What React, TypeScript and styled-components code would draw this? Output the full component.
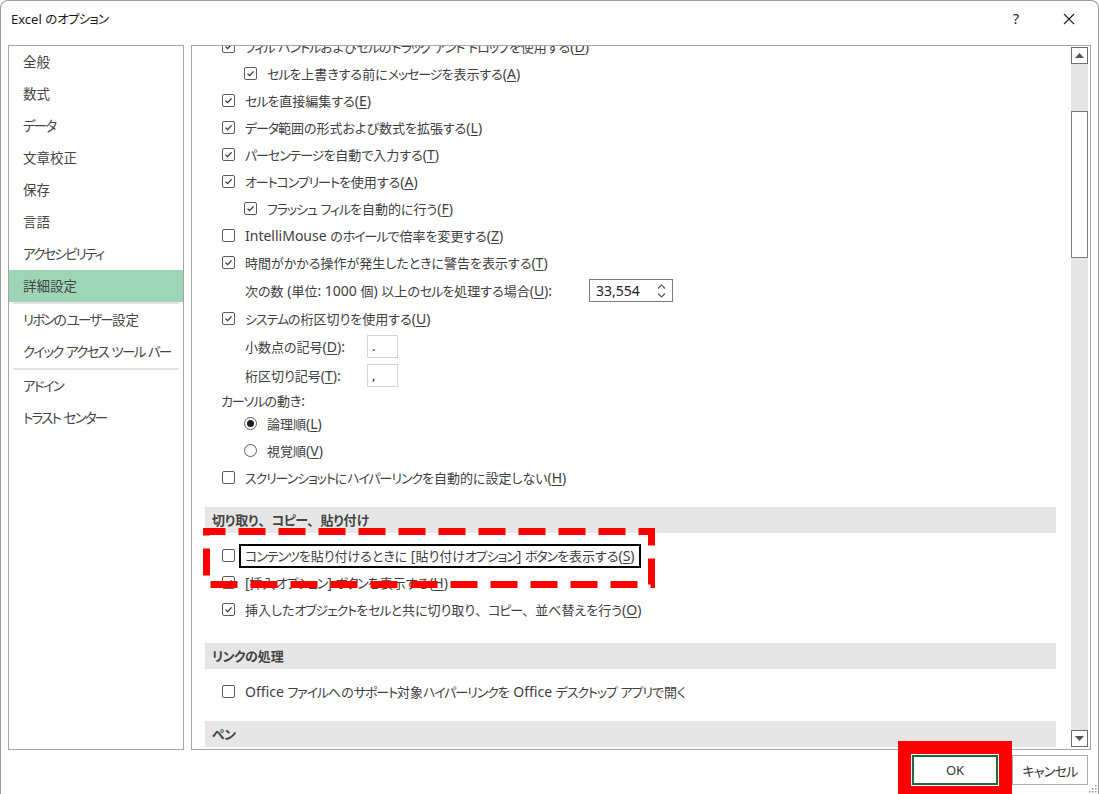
import * as React from 'react';
import styled, { createGlobalStyle } from 'styled-components';

// ----------------------------------------
// global
// ----------------------------------------
const GlobalStyle = createGlobalStyle`
  html, body {
    margin: 0;
    padding: 0;
    background: #ffffff;
  }
  body {
    font-family: "Noto Sans", "Noto Sans CJK JP", sans-serif;
    color: #404040;
  }
  * {
    box-sizing: border-box;
  }
`;

// ----------------------------------------
// text helper: katakana runs are narrower and latin runs a bit larger
// in the Yu Gothic UI look of the original dialog
// ----------------------------------------
const TOKEN = /([\u30A0-\u30FF]+|[\u3001\u3002]|[\x20-\x7E]+)/;

const Txt: React.VFC<{ children: string }> = ({ children }) => (
  <>
    {children
      .split(TOKEN)
      .filter(Boolean)
      .map((part, i) => {
        if (/^[\u30A0-\u30FF]+$/.test(part)) return <Kana key={i}>{part}</Kana>;
        if (/^[\u3001\u3002]$/.test(part)) return <Punct key={i}>{part}</Punct>;
        if (/^[\x20-\x7E]+$/.test(part)) return <Latin key={i}>{part}</Latin>;
        return <React.Fragment key={i}>{part}</React.Fragment>;
      })}
  </>
);

// ----------------------------------------
// small parts
// ----------------------------------------
type CheckProps = { checked: boolean };

const CheckBox: React.VFC<CheckProps> = ({ checked }) => (
  <BoxFrame>
    {checked && (
      <svg width="11" height="11" viewBox="0 0 11 11">
        <path d="M2.5 5.6 L4.6 7.6 L8.6 3.4" fill="none" stroke="#333" strokeWidth="1.3" />
      </svg>
    )}
  </BoxFrame>
);

const Radio: React.VFC<CheckProps> = ({ checked }) => (
  <RadioFrame>{checked && <RadioDot />}</RadioFrame>
);

const Key: React.VFC<{ k?: string; colon?: boolean }> = ({ k, colon }) =>
  k ? (
    <Latin>
      (<u>{k}</u>){colon ? ':' : ''}
    </Latin>
  ) : null;

type RowProps = {
  checked: boolean;
  level?: number;
  label: string;
  k?: string;
  h?: number;
};

const CheckRow: React.VFC<RowProps> = ({ checked, level = 0, label, k, h = 27 }) => (
  <Row $level={level} $h={h}>
    <CheckBox checked={checked} />
    <Label>
      <Txt>{label}</Txt>
      <Key k={k} />
    </Label>
  </Row>
);

const menu = [
  ['全般', '数式', 'データ', '文章校正', '保存', '言語', 'アクセシビリティ', '詳細設定'],
  ['リボンのユーザー設定', 'クイック アクセス ツール バー'],
  ['アドイン', 'トラスト センター'],
];

// ----------------------------------------
// component
// ----------------------------------------
export default function App() {
  return (
    <>
      <GlobalStyle />
      <Window>
        <TitleBar>
          <Title>
            <Txt>Excel のオプション</Txt>
          </Title>
          <HelpButton>?</HelpButton>
          <TitleButton>
            <svg width="12" height="12" viewBox="0 0 12 12">
              <path d="M1 1 L11 11 M11 1 L1 11" stroke="#222" strokeWidth="1.1" />
            </svg>
          </TitleButton>
        </TitleBar>

        <Body>
          <Nav>
            {menu.map((group, gi) => (
              <React.Fragment key={gi}>
                {gi > 0 && <NavSeparator />}
                {group.map((item) => (
                  <NavItem key={item} $active={item === '詳細設定'}>
                    <Txt>{item}</Txt>
                  </NavItem>
                ))}
              </React.Fragment>
            ))}
          </Nav>

          <Main>
            <Viewport>
              <Content>
                <CheckRow checked label="フィル ハンドルおよびセルのドラッグ アンド ドロップを使用する" k="D" />
                <CheckRow checked level={1} label="セルを上書きする前にメッセージを表示する" k="A" />
                <CheckRow checked label="セルを直接編集する" k="E" />
                <CheckRow checked label="データ範囲の形式および数式を拡張する" k="L" />
                <CheckRow checked label="パーセンテージを自動で入力する" k="T" />
                <CheckRow checked label="オートコンプリートを使用する" k="A" />
                <CheckRow checked level={1} label="フラッシュ フィルを自動的に行う" k="F" />
                <CheckRow checked={false} label="IntelliMouse のホイールで倍率を変更する" k="Z" />
                <CheckRow checked label="時間がかかる操作が発生したときに警告を表示する" k="T" />

                <FieldRow $h={29}>
                  <FixedLabel $w={332}>
                    <Txt>次の数 (単位: 1000 個) 以上のセルを処理する場合</Txt>
                    <Key k="U" colon />
                  </FixedLabel>
                  <Spinner>
                    <Latin>33,554</Latin>
                    <svg width="9" height="16" viewBox="0 0 9 16">
                      <path d="M1 5.5 L4.5 2 L8 5.5 M1 10.5 L4.5 14 L8 10.5" fill="none" stroke="#555" strokeWidth="1.1" />
                    </svg>
                  </Spinner>
                </FieldRow>

                <CheckRow checked label="システムの桁区切りを使用する" k="U" />

                <FieldRow $h={29}>
                  <FixedLabel $w={122}>
                    小数点の記号<Key k="D" colon />
                  </FixedLabel>
                  <SmallInput>.</SmallInput>
                </FieldRow>
                <FieldRow $h={29}>
                  <FixedLabel $w={122}>
                    桁区切り記号<Key k="T" colon />
                  </FixedLabel>
                  <SmallInput>,</SmallInput>
                </FieldRow>

                <PlainRow $h={20}>
                  <Txt>カーソルの動き:</Txt>
                </PlainRow>
                <Row $level={1} $h={27}>
                  <Radio checked />
                  <Label>
                    論理順<Key k="L" />
                  </Label>
                </Row>
                <Row $level={1} $h={27}>
                  <Radio checked={false} />
                  <Label>
                    視覚順<Key k="V" />
                  </Label>
                </Row>
                <CheckRow checked={false} label="スクリーンショットにハイパーリンクを自動的に設定しない" k="H" />

                <SectionHeader $gap={16}>
                  <Txt>切り取り、コピー、貼り付け</Txt>
                </SectionHeader>
                <SectionBody>
                  <Row $level={0} $h={27}>
                    <CheckBox checked={false} />
                    <FramedLabel>
                      <Txt>コンテンツを貼り付けるときに [貼り付けオプション] ボタンを表示する</Txt>
                      <Key k="S" />
                    </FramedLabel>
                  </Row>
                  <CheckRow checked label="[挿入オプション] ボタンを表示する" k="H" />
                  <CheckRow checked label="挿入したオブジェクトをセルと共に切り取り、コピー、並べ替えを行う" k="O" />
                  <DashedMark width="452" height="60" viewBox="0 0 452 60">
                    <rect
                      x="3.5"
                      y="3.5"
                      width="445"
                      height="53"
                      fill="none"
                      stroke="#ff0000"
                      strokeWidth="7"
                      strokeDasharray="27 13"
                      strokeDashoffset="8"
                    />
                  </DashedMark>
                </SectionBody>

                <SectionHeader $gap={20}>
                  <Txt>リンクの処理</Txt>
                </SectionHeader>
                <SectionBody>
                  <CheckRow checked={false} label="Office ファイルへのサポート対象ハイパーリンクを Office デスクトップ アプリで開く" />
                </SectionBody>

                <SectionHeader $gap={16}>
                  <Txt>ペン</Txt>
                </SectionHeader>
              </Content>
            </Viewport>

            <ScrollBar>
              <ScrollArrow>
                <svg width="9" height="5" viewBox="0 0 9 5">
                  <path d="M0 5 L4.5 0 L9 5 Z" fill="#555" />
                </svg>
              </ScrollArrow>
              <Track $h={47} />
              <Thumb />
              <Track $h={0} $grow />
              <ScrollArrow>
                <svg width="9" height="5" viewBox="0 0 9 5">
                  <path d="M0 0 L4.5 5 L9 0 Z" fill="#555" />
                </svg>
              </ScrollArrow>
            </ScrollBar>
          </Main>
        </Body>

        <Footer>
          <OkButton>OK</OkButton>
          <Button>
            <Txt>キャンセル</Txt>
          </Button>
          <Grip width="10" height="10" viewBox="0 0 10 10">
            <rect x="8" y="2" width="1.5" height="1.5" fill="#999" />
            <rect x="5" y="5" width="1.5" height="1.5" fill="#999" />
            <rect x="8" y="5" width="1.5" height="1.5" fill="#999" />
            <rect x="2" y="8" width="1.5" height="1.5" fill="#999" />
            <rect x="5" y="8" width="1.5" height="1.5" fill="#999" />
            <rect x="8" y="8" width="1.5" height="1.5" fill="#999" />
          </Grip>
        </Footer>
      </Window>
    </>
  );
}

// ----------------------------------------
// styles
// ----------------------------------------
const Kana = styled.span`
  font-feature-settings: 'palt';
  letter-spacing: var(--kana, -1.1px);
`;

const Punct = styled.span`
  font-feature-settings: normal;
`;

const Latin = styled.span`
  font-size: var(--latin, 14px);
`;

const Window = styled.div`
  position: relative;
  width: 1099px;
  height: 794px;
  overflow: hidden;
  border: 1px solid #9c9c9c;
  border-bottom: none;
  border-radius: 8px 8px 0 0;
  display: flex;
  flex-direction: column;
  background: #ffffff;
`;

const TitleBar = styled.div`
  height: 35px;
  display: flex;
  align-items: center;
  padding: 0 6px 0 10px;
`;

const Title = styled.div`
  flex: 1;
  font-size: 12.5px;
  color: #1a1a1a;
  font-feature-settings: 'palt';
  --latin: 13px;
  --kana: -0.8px;
`;

const TitleButton = styled.div`
  width: 46px;
  height: 35px;
  display: flex;
  align-items: center;
  justify-content: center;
  font-size: 14px;
  color: #222;
`;

const HelpButton = styled(TitleButton)`
  margin-right: 7px;
`;

const Body = styled.div`
  margin-top: 9px;
  height: 705px;
  display: flex;
  gap: 7px;
  padding-left: 7px;
`;

const Nav = styled.div`
  width: 176px;
  border: 1px solid #a5a5a5;
  display: flex;
  flex-direction: column;
  font-size: 13.5px;
  font-feature-settings: 'palt';
  color: #444;
  --kana: -1.8px;
  --latin: 13.5px;
`;

const NavItem = styled.div<{ $active: boolean }>`
  height: 32px;
  line-height: 32px;
  padding-left: 14px;
  background: ${(p) => (p.$active ? '#9fd5b7' : 'transparent')};
  white-space: nowrap;
`;

const NavSeparator = styled.div`
  height: 2px;
  margin: 0 4px;
  background: #e3e3e3;
`;

const Main = styled.div`
  width: 900px;
  border: 1px solid #a5a5a5;
  display: flex;
`;

const Viewport = styled.div`
  flex: 1;
  overflow: hidden;
`;

const Content = styled.div`
  margin-top: -13px;
  font-size: 13px;
  font-feature-settings: 'palt';
  color: #404040;

  u {
    text-decoration-thickness: 1px;
    text-underline-offset: 2px;
  }
`;

const Row = styled.div<{ $level: number; $h: number }>`
  height: ${(p) => p.$h}px;
  display: flex;
  align-items: center;
  padding-left: ${(p) => 30 + p.$level * 22}px;
  white-space: nowrap;
`;

const FieldRow = styled.div<{ $h: number }>`
  height: ${(p) => p.$h}px;
  display: flex;
  align-items: center;
  padding-left: 53px;
  white-space: nowrap;
`;

const PlainRow = styled.div<{ $h: number }>`
  height: ${(p) => p.$h}px;
  display: flex;
  align-items: center;
  padding-left: 29px;
`;

const Label = styled.span`
  line-height: 18px;
`;

const FixedLabel = styled.span<{ $w: number }>`
  width: ${(p) => p.$w}px;
  flex: none;
  line-height: 18px;
`;

const FramedLabel = styled.span`
  line-height: 18px;
  padding: 0 3px;
  margin-left: -3px;
  outline: 2px solid #000;
  outline-offset: 1px;
`;

const BoxFrame = styled.span`
  width: 13px;
  height: 13px;
  margin-right: 10px;
  flex: none;
  border: 1px solid #5c5c5c;
  border-radius: 2px;
  display: flex;
  align-items: center;
  justify-content: center;
  background: #fff;
`;

const RadioFrame = styled.span`
  width: 13px;
  height: 13px;
  margin-right: 10px;
  flex: none;
  border: 1px solid #5c5c5c;
  border-radius: 50%;
  display: flex;
  align-items: center;
  justify-content: center;
`;

const RadioDot = styled.span`
  width: 7px;
  height: 7px;
  border-radius: 50%;
  background: #1f1f1f;
`;

const Spinner = styled.div`
  margin-left: 12px;
  width: 84px;
  height: 23px;
  border: 1px solid #7a7a7a;
  display: flex;
  align-items: center;
  justify-content: space-between;
  padding: 0 6px 0 6px;
  color: #222;
`;

const SmallInput = styled.div`
  width: 31px;
  height: 23px;
  border: 1px solid #d4d4d4;
  padding-left: 4px;
  line-height: 20px;
  color: #222;
`;

const SectionHeader = styled.div<{ $gap: number }>`
  margin: ${(p) => p.$gap}px 15px 0 13px;
  height: 26px;
  line-height: 26px;
  padding-left: 7px;
  background: #e6e6e6;
  font-weight: bold;
  color: #444;
  --kana: -0.6px;
`;

const SectionBody = styled.div`
  position: relative;
  padding-top: 9px;
`;

const DashedMark = styled.svg`
  position: absolute;
  left: 11px;
  top: -5px;
  pointer-events: none;
`;

const ScrollBar = styled.div`
  width: 19px;
  display: flex;
  flex-direction: column;
  padding: 1px 2px 2px 0;
  background: #ffffff;
`;

const ScrollArrow = styled.div`
  height: 17px;
  border: 1px solid #6d6d6d;
  background: #fff;
  display: flex;
  align-items: center;
  justify-content: center;
`;

const Track = styled.div<{ $h: number; $grow?: boolean }>`
  height: ${(p) => p.$h}px;
  flex: ${(p) => (p.$grow ? 1 : 'none')};
  background: #e6e6e6;
`;

const Thumb = styled.div`
  height: 147px;
  border: 1px solid #7a7a7a;
  background: #fff;
`;

const Footer = styled.div`
  position: relative;
  display: flex;
  justify-content: flex-end;
  gap: 14px;
  padding: 5px 10px 0 0;
`;

const Button = styled.button`
  width: 76px;
  height: 30px;
  border: 1px solid #adadad;
  background: #fdfdfd;
  font-family: "Noto Sans", "Noto Sans CJK JP", sans-serif;
  font-size: 13px;
  font-feature-settings: 'palt';
  color: #333;
  padding: 0;
  --kana: -0.8px;
  --latin: 13.5px;
`;

const OkButton = styled(Button)`
  width: 86px;
  border: 2px solid #1e6b41;
  background: #fff;
  outline: 13px solid #ff0000;
  outline-offset: 1px;
`;

const Grip = styled.svg`
  position: absolute;
  right: 1px;
  bottom: -8px;
`;
